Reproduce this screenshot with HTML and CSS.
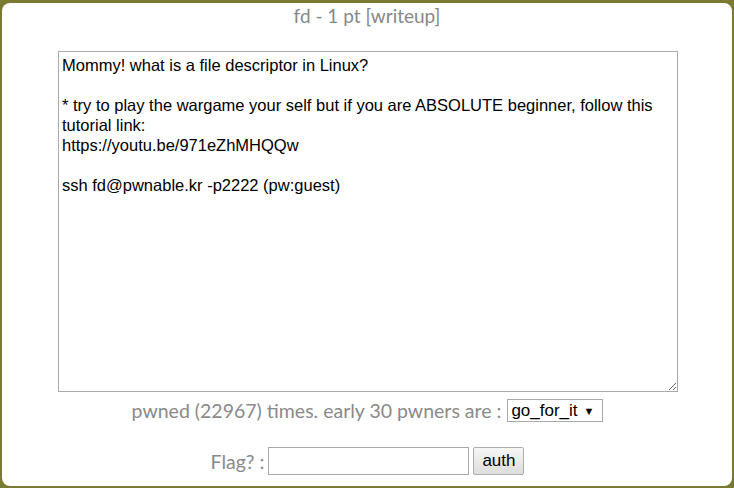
FILE: index.html
```html
<!DOCTYPE html>
<html>
<head>
<meta charset="utf-8">
<link rel="stylesheet" href="styles.css">
</head>
<body>
<div class="frame">
  <div class="title">fd - 1 pt [writeup]</div>
  <textarea class="desc">Mommy! what is a file descriptor in Linux?

* try to play the wargame your self but if you are ABSOLUTE beginner, follow this tutorial link:
https://youtu.be/971eZhMHQQw

ssh fd@pwnable.kr -p2222 (pw:guest)</textarea>
  <div class="row pwned">
    <span class="label">pwned (22967) times. early 30 pwners are :</span>
    <div class="select"><span>go_for_it</span><span class="arrow">▼</span></div>
  </div>
  <div class="row flag">
    <span class="label">Flag? :</span>
    <input class="flag-input" type="text">
    <button class="auth">auth</button>
  </div>
</div>
</body>
</html>
```
FILE: styles.css
```css
html, body {
  margin: 0;
  padding: 0;
  background: #7a7a33;
  width: 734px;
  height: 488px;
  overflow: hidden;
}
.frame {
  margin: 3px 2px 0 2px;
  height: 483px;
  background: #ffffff;
  border-radius: 8px;
  display: flex;
  flex-direction: column;
  align-items: center;
  font-family: Lato, "Liberation Sans", sans-serif;
  color: #8a8a8a;
}
.title {
  font-size: 19px;
  line-height: 22px;
  margin-top: 2px;
  color: #888888;
}
.desc {
  box-sizing: border-box;
  width: 620px;
  height: 341px;
  margin: 24px 0 0 2px;
  padding: 3px 3px;
  border: 1px solid #a9a9a9;
  font-family: "Liberation Sans", Arial, sans-serif;
  font-size: 16.5px;
  line-height: 20px;
  color: #000;
  outline: none;
  resize: both;
  overflow: hidden;
}
.row {
  display: flex;
  align-items: center;
}
.label {
  font-size: 19.5px;
  color: #8a8a8a;
}
.pwned {
  margin-top: 7px;
  gap: 6px;
  margin-left: 1px;
}
.select {
  box-sizing: border-box;
  width: 96px;
  height: 23px;
  border: 1px solid #a9a9a9;
  display: flex;
  align-items: center;
  justify-content: space-between;
  padding: 0 8px 0 3px;
  font-family: "Liberation Sans", Arial, sans-serif;
  font-size: 17px;
  color: #000;
}
.arrow {
  font-size: 11px;
}
.flag {
  margin-top: 25px;
  gap: 4px;
  margin-left: 1px;
}
.flag-input {
  box-sizing: border-box;
  width: 201px;
  height: 28px;
  border: 1px solid #a9a9a9;
  margin: 0;
  padding: 1px 2px;
}
.auth {
  box-sizing: border-box;
  width: 51px;
  height: 28px;
  margin: 0;
  border: 1px solid #adadad;
  border-radius: 2px;
  background: linear-gradient(#f6f6f6, #dddddd);
  font-family: "Liberation Sans", Arial, sans-serif;
  font-size: 17px;
  color: #000;
  padding: 0;
}
```
